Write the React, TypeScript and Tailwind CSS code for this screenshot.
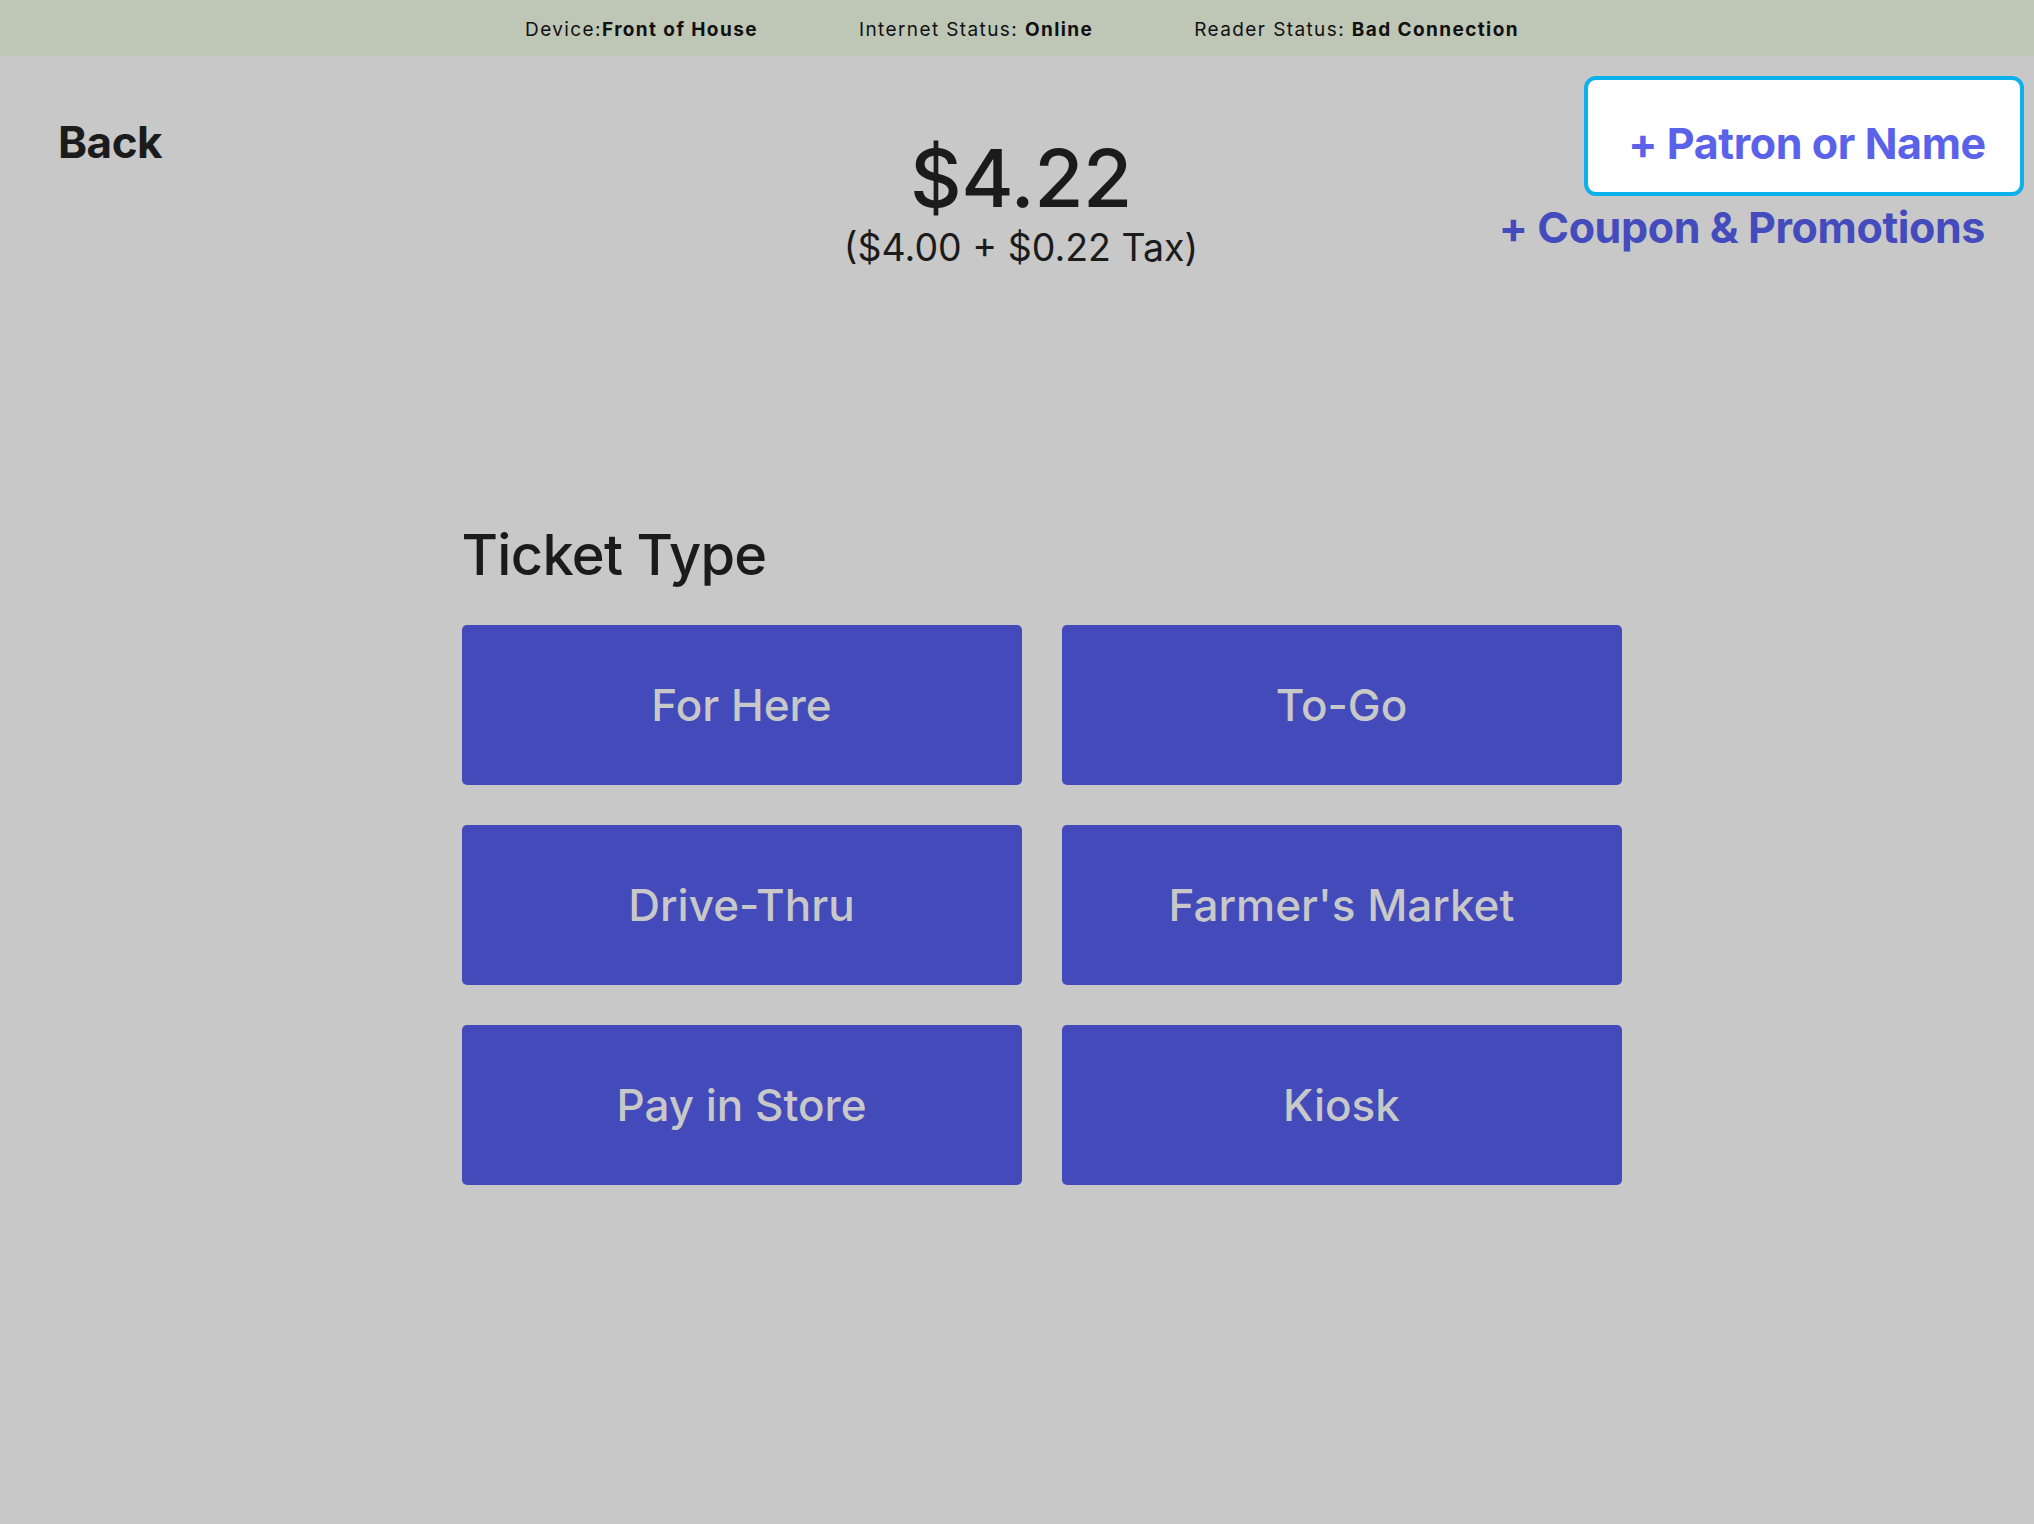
import React from 'react';

const ticketTypes = ['For Here', 'To-Go', 'Drive-Thru', "Farmer's Market", 'Pay in Store', 'Kiosk'];

const StatusItem: React.FC<{ label: string; value: string }> = ({ label, value }) => (
  <div className="text-[19px] tracking-[1.4px] text-[#111]">
    {label}
    <span className="font-bold">{value}</span>
  </div>
);

export default function App() {
  return (
    <div className="min-h-screen bg-[#c8c8c8] font-['Inter','Liberation_Sans',sans-serif] text-[#1b1b1b]">
      {/* status bar */}
      <div className="h-[56px] bg-[#bec6b6] flex items-center justify-center gap-[101px] pl-[10px] pt-[4px]">
        <StatusItem label="Device:" value="Front of House" />
        <StatusItem label="Internet Status: " value="Online" />
        <StatusItem label="Reader Status: " value="Bad Connection" />
      </div>

      {/* header */}
      <div className="flex items-start">
        <div className="flex-1 pt-[64px]">
          <button className="ml-[58px] text-[44px] font-bold leading-none tracking-[-0.5px]">Back</button>
        </div>
        <div className="flex flex-col items-center pt-[82px]">
          <div className="ml-[8px] text-[80px] font-medium leading-none tracking-[-0.5px]">$4.22</div>
          <div className="ml-[8px] mt-[11px] text-[37.5px] leading-none">($4.00 + $0.22 Tax)</div>
        </div>
        <div className="flex-1 flex flex-col items-end pt-[20px]">
          <button className="mr-[10px] w-[440px] h-[120px] bg-white border-4 border-[#0bb0ec] rounded-[12px] flex items-center justify-center pl-[6px] pt-[14px] text-[43px] font-bold leading-none text-[#5a62ea] tracking-[-0.4px]">
            + Patron or Name
          </button>
          <button className="mr-[49px] mt-[10px] text-[43px] font-bold leading-none text-[#434bbd] tracking-[-0.4px]">
            + Coupon &amp; Promotions
          </button>
        </div>
      </div>

      {/* ticket type */}
      <div className="flex justify-center pl-[49px] mt-[260px]">
        <div className="w-[1160px]">
          <h2 className="text-[56px] font-medium leading-none tracking-[-0.7px]">Ticket Type</h2>
          <div className="mt-[42px] grid grid-cols-2 gap-[40px]">
            {ticketTypes.map((t) => (
              <button
                key={t}
                className="h-[160px] rounded-[5px] bg-[#434bbb] text-[#c8c8c8] text-[44px] font-medium leading-none flex items-center justify-center"
              >
                {t}
              </button>
            ))}
          </div>
        </div>
      </div>
    </div>
  );
}
